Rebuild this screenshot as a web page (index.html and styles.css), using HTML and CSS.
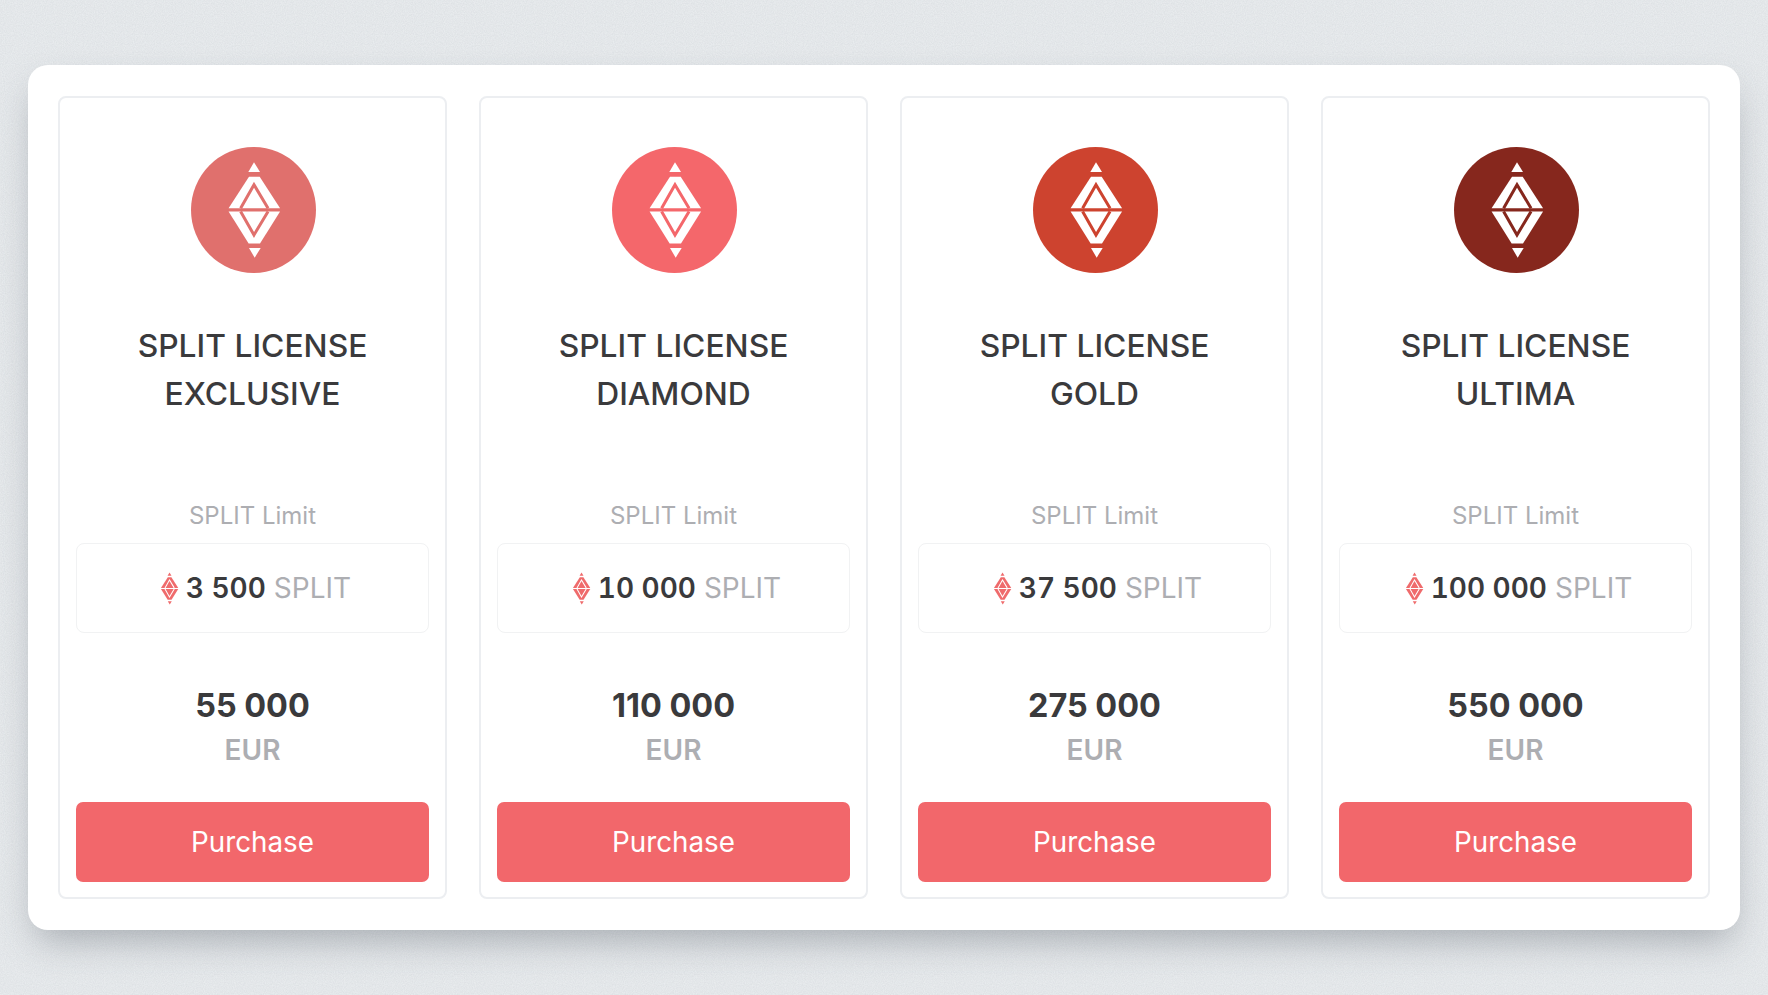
FILE: index.html
```html
<!DOCTYPE html>
<html lang="en">
<head>
    <meta charset="UTF-8">
    <meta name="viewport" content="width=device-width, initial-scale=1.0">
    <title>Split licenses</title>
    <link rel="stylesheet" href="styles.css">
</head>
<body>
    <svg class="defs" width="0" height="0" aria-hidden="true">
        <symbol id="split-mark" viewBox="170 93 160 293">
            <polygon class="mark-fill" points="250,97 268,126 233,126"/>
            <polygon class="mark-fill" points="235,353 270,353 252,382"/>
            <polygon class="mark-fill" points="235,140 267,140 328,234 174,234"/>
            <polygon class="mark-fill" points="174,244 328,244 268,340 234,340"/>
            <polyline class="mark-line" points="210,234 250,164 292,234"/>
            <polyline class="mark-line" points="210,244 250,314 292,244"/>
        </symbol>
    </svg>

    <main class="panel">
        <section class="card">
            <div class="badge badge-exclusive">
                <svg class="badge-mark"><use href="#split-mark"/></svg>
            </div>
            <h2 class="title">SPLIT LICENSE<br>EXCLUSIVE</h2>
            <p class="limit-label">SPLIT Limit</p>
            <div class="limit-box">
                <svg class="small-mark"><use href="#split-mark"/></svg>
                <span class="limit-value">3 500</span>
                <span class="limit-unit">SPLIT</span>
            </div>
            <p class="price">55 000</p>
            <p class="currency">EUR</p>
            <button class="buy">Purchase</button>
        </section>

        <section class="card">
            <div class="badge badge-diamond">
                <svg class="badge-mark"><use href="#split-mark"/></svg>
            </div>
            <h2 class="title">SPLIT LICENSE<br>DIAMOND</h2>
            <p class="limit-label">SPLIT Limit</p>
            <div class="limit-box">
                <svg class="small-mark"><use href="#split-mark"/></svg>
                <span class="limit-value">10 000</span>
                <span class="limit-unit">SPLIT</span>
            </div>
            <p class="price">110 000</p>
            <p class="currency">EUR</p>
            <button class="buy">Purchase</button>
        </section>

        <section class="card">
            <div class="badge badge-gold">
                <svg class="badge-mark"><use href="#split-mark"/></svg>
            </div>
            <h2 class="title">SPLIT LICENSE<br>GOLD</h2>
            <p class="limit-label">SPLIT Limit</p>
            <div class="limit-box">
                <svg class="small-mark"><use href="#split-mark"/></svg>
                <span class="limit-value">37 500</span>
                <span class="limit-unit">SPLIT</span>
            </div>
            <p class="price">275 000</p>
            <p class="currency">EUR</p>
            <button class="buy">Purchase</button>
        </section>

        <section class="card">
            <div class="badge badge-ultima">
                <svg class="badge-mark"><use href="#split-mark"/></svg>
            </div>
            <h2 class="title">SPLIT LICENSE<br>ULTIMA</h2>
            <p class="limit-label">SPLIT Limit</p>
            <div class="limit-box">
                <svg class="small-mark"><use href="#split-mark"/></svg>
                <span class="limit-value">100 000</span>
                <span class="limit-unit">SPLIT</span>
            </div>
            <p class="price">550 000</p>
            <p class="currency">EUR</p>
            <button class="buy">Purchase</button>
        </section>
    </main>
</body>
</html>
```

FILE: styles.css
```css
* {
    box-sizing: border-box;
}
html, body {
    height: 100%;
}
body {
    margin: 0;
    padding: 65px 28px 0;
    overflow: hidden;
    font-family: Inter, "Liberation Sans", sans-serif;
    background-color: #eceff1;
    background-image: url("data:image/svg+xml,%3Csvg xmlns='http://www.w3.org/2000/svg' width='240' height='240'%3E%3Cfilter id='n'%3E%3CfeTurbulence type='fractalNoise' baseFrequency='0.9' numOctaves='2'/%3E%3CfeColorMatrix values='0 0 0 0 0.45 0 0 0 0 0.48 0 0 0 0 0.52 0 0 0 0.3 0'/%3E%3C/filter%3E%3Crect width='240' height='240' filter='url(%23n)'/%3E%3C/svg%3E");
    color: #3a3a3c;
}
.defs {
    position: absolute;
}
.mark-fill {
    fill: var(--mark-fill);
}
.mark-line {
    fill: none;
    stroke: var(--mark-line);
    stroke-width: 9;
}
.panel {
    display: grid;
    grid-template-columns: repeat(4, 1fr);
    gap: 32px;
    height: 865px;
    padding: 31px 30px;
    background-color: #fff;
    border-radius: 20px;
    box-shadow: 0 18px 36px -8px rgba(70, 80, 90, 0.38);
}
.card {
    display: flex;
    flex-direction: column;
    align-items: center;
    padding: 49px 16px 15px;
    border: 2px solid #eceef1;
    border-radius: 8px;
}
.badge {
    display: flex;
    align-items: center;
    justify-content: center;
    flex: none;
    width: 125px;
    height: 126px;
    margin-left: 2px;
    border-radius: 50%;
    --mark-fill: #fff;
}
.badge-exclusive { background-color: #e0706d; --mark-line: #e0706d; }
.badge-diamond { background-color: #f4676b; --mark-line: #f4676b; }
.badge-gold { background-color: #cd432f; --mark-line: #cd432f; }
.badge-ultima { background-color: #86271d; --mark-line: #86271d; }
.badge-mark {
    width: 54px;
    height: 98px;
}
.title {
    margin: 49px 0 0;
    font-size: 31.8px;
    font-weight: 500;
    line-height: 48px;
    text-align: center;
}
.limit-label {
    margin: 82px 0 0;
    font-size: 24px;
    line-height: 32px;
    color: #adaeb2;
}
.limit-box {
    display: flex;
    align-items: center;
    justify-content: center;
    gap: 8px;
    width: 100%;
    height: 90px;
    margin-top: 11px;
    padding-left: 6px;
    border: 1px solid #f1f2f3;
    border-radius: 8px;
    font-size: 28px;
    --mark-fill: #ef6b6c;
    --mark-line: #fff;
}
.small-mark {
    width: 19px;
    height: 33px;
    margin-right: -1px;
}
.limit-value {
    font-weight: 600;
    font-variant-numeric: tabular-nums;
}
.limit-unit {
    color: #adaeb2;
}
.price {
    margin: 51px 0 0;
    font-size: 32.4px;
    font-weight: 700;
    line-height: 44px;
}
.currency {
    margin: 0;
    font-size: 28px;
    font-weight: 600;
    line-height: 44px;
    color: #adaeb2;
}
.buy {
    width: 100%;
    height: 80px;
    margin-top: auto;
    border: none;
    border-radius: 7px;
    background-color: #f2676b;
    color: #fff;
    font-family: inherit;
    font-size: 27.8px;
    cursor: pointer;
}
```
